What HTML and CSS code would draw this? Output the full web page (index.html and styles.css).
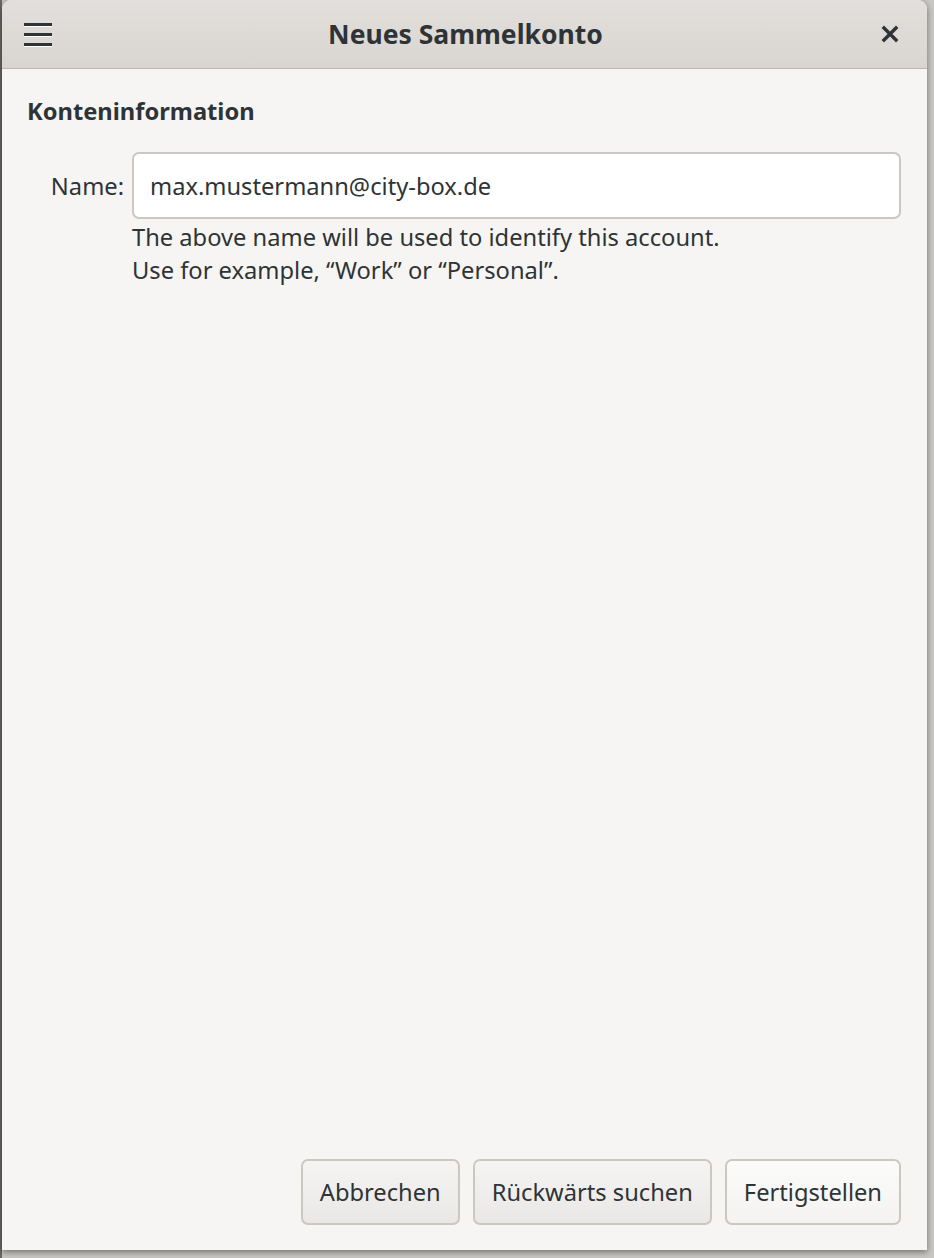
FILE: index.html
```html
<!DOCTYPE html>
<html lang="de">
<head>
  <meta charset="UTF-8">
  <meta name="viewport" content="width=device-width, initial-scale=1.0">
  <title>Neues Sammelkonto</title>
  <link rel="stylesheet" href="styles.css">
</head>
<body>
  <div class="window">
    <header class="titlebar">
      <button class="menu-btn" aria-label="Menü">
        <span></span><span></span><span></span>
      </button>
      <h1 class="title">Neues Sammelkonto</h1>
      <button class="close-btn" aria-label="Schließen">
        <svg width="18" height="18" viewBox="0 0 18 18">
          <path d="M3 3 L15 15 M15 3 L3 15" stroke="#2e3436" stroke-width="3.4" stroke-linecap="square" fill="none"/>
        </svg>
      </button>
    </header>

    <main class="content">
      <h2 class="section-title">Konteninformation</h2>
      <div class="form-row">
        <label for="name">Name:</label>
        <input type="text" id="name" value="max.mustermann@city-box.de">
        <p class="hint">
          The above name will be used to identify this account.<br>
          Use for example, “Work” or “Personal”.
        </p>
      </div>
    </main>

    <footer class="actions">
      <button class="btn">Abbrechen</button>
      <button class="btn">Rückwärts suchen</button>
      <button class="btn btn-default">Fertigstellen</button>
    </footer>
  </div>
</body>
</html>
```

FILE: styles.css
```css
:root {
  --text: #2e3436;
  --window-bg: #f6f5f4;
  --border: #cdc7c2;
}
body {
  margin: 0;
  height: 1258px;
  overflow: hidden;
  font-family: "Noto Sans", "Open Sans", sans-serif;
  font-size: 23.7px;
  color: var(--text);
  background: linear-gradient(to right, #6a6866 2px, #c9c7c4 2px);
}
.window {
  margin-left: 2px;
  width: 925px;
  height: 1250px;
  background: var(--window-bg);
  border-radius: 9px 9px 0 0;
  box-shadow: 0 2px 6px rgba(0, 0, 0, 0.45);
  display: flex;
  flex-direction: column;
  overflow: hidden;
}
.titlebar {
  height: 68px;
  border-bottom: 1px solid #bcb7b2;
  background: linear-gradient(#e2dfdc, #d9d5d1);
  display: flex;
  align-items: center;
  padding: 0 26px 0 22px;
}
.menu-btn {
  background: none;
  border: none;
  padding: 0;
  width: 32px;
  display: flex;
  flex-direction: column;
  gap: 7px;
  align-items: flex-start;
}
.menu-btn span {
  display: block;
  width: 28px;
  height: 3px;
  background: var(--text);
  box-shadow: 0 1px 0 #fdfdfd;
}
.title {
  flex: 1;
  margin: 0;
  text-align: center;
  font-size: 26.5px;
  font-weight: bold;
  padding-right: 6px;
}
.close-btn {
  background: none;
  border: none;
  padding: 0;
  width: 18px;
  height: 18px;
  display: flex;
  margin-right: 2px;
}
.content {
  flex: 1;
  padding: 29px 26px 0 25px;
}
.section-title {
  margin: 0 0 27px;
  font-size: 23.7px;
  font-weight: bold;
  line-height: 27px;
}
.form-row {
  display: grid;
  grid-template-columns: 97px 1fr;
  column-gap: 8px;
  align-items: center;
}
.form-row label {
  text-align: right;
}
.form-row input {
  height: 67px;
  box-sizing: border-box;
  border: 2px solid var(--border);
  border-radius: 7px;
  background: #ffffff;
  padding: 0 16px;
  font-family: inherit;
  font-size: 23.7px;
  color: var(--text);
  outline: none;
}
.hint {
  grid-column: 2;
  margin: 2px 0 0;
  line-height: 33px;
}
.actions {
  display: flex;
  justify-content: flex-end;
  gap: 13px;
  padding: 0 26px 25px 0;
}
.btn {
  height: 66px;
  padding: 0 17px;
  border: 2px solid var(--border);
  border-radius: 7px;
  background: linear-gradient(#f5f4f3, #eae8e6);
  font-family: inherit;
  font-size: 23.7px;
  color: var(--text);
}
.btn-default {
  background: linear-gradient(#fbfbfa, #f4f3f2);
}
```
